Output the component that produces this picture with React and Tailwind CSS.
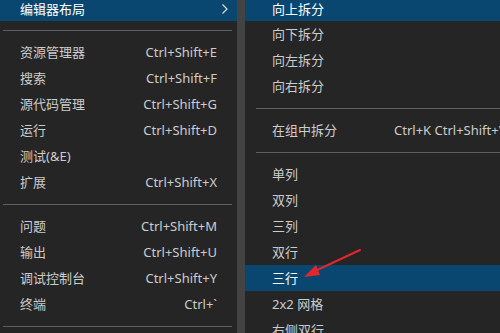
import React from 'react'

const leftGroups = [
  [
    { label: '资源管理器', key: 'Ctrl+Shift+E' },
    { label: '搜索', key: 'Ctrl+Shift+F' },
    { label: '源代码管理', key: 'Ctrl+Shift+G' },
    { label: '运行', key: 'Ctrl+Shift+D' },
    { label: '测试(&E)', key: '' },
    { label: '扩展', key: 'Ctrl+Shift+X' },
  ],
  [
    { label: '问题', key: 'Ctrl+Shift+M' },
    { label: '输出', key: 'Ctrl+Shift+U' },
    { label: '调试控制台', key: 'Ctrl+Shift+Y' },
    { label: '终端', key: 'Ctrl+`' },
  ],
]

const layouts = ['单列', '双列', '三列', '双行', '三行', '2x2 网格', '右侧双行']

function Sep({ className = '' }) {
  return (
    <div className={'h-[18px] flex items-center ' + className}>
      <div className="h-px w-full bg-[#5f5f5f]" />
    </div>
  )
}

function LeftRow({ label, shortcut }) {
  return (
    <div className="h-[26px] flex items-center pl-5 pr-5 text-[#cccccc]">
      <span className="flex-1">{label}</span>
      <span>{shortcut}</span>
    </div>
  )
}

function RightRow({ label, active }) {
  return (
    <div className={'h-[26px] flex items-center pl-[27px] ' + (active ? 'bg-[#094771] text-white' : 'text-[#cccccc]')}>
      {label}
    </div>
  )
}

export default function App() {
  return (
    <div
      className="relative w-[500px] h-[333px] overflow-hidden bg-[#252526] flex text-[13px] leading-none"
      style={{ fontFamily: '"Noto Sans", "Noto Sans CJK SC", sans-serif' }}
    >
      {/* left menu */}
      <div className="w-[237px] shrink-0">
        <div className="h-[24px] mt-[-3px] flex items-center pl-5 pr-2 bg-[#094771] text-white">
          <span className="flex-1">编辑器布局</span>
          <svg width="8" height="12" viewBox="0 0 8 12" fill="none" stroke="#d4d4d4" strokeWidth="1.3">
            <polyline points="1.5,1.5 6,6 1.5,10.5" />
          </svg>
        </div>
        <Sep className="px-[3px] mr-[2px]" />
        {leftGroups.map((group, i) => (
          <div key={i}>
            {group.map((it) => (
              <LeftRow key={it.label} label={it.label} shortcut={it.key} />
            ))}
            <Sep className="px-[3px] mr-[2px]" />
          </div>
        ))}
      </div>

      {/* scrollbar strip */}
      <div className="w-[8px] shrink-0 bg-[#434343]" />

      {/* right menu */}
      <div className="flex-1 min-w-0">
        <div className="h-[24px] mt-[-3px] flex items-center pl-[27px] bg-[#094771] text-white">向上拆分</div>
        <RightRow label="向下拆分" />
        <RightRow label="向左拆分" />
        <RightRow label="向右拆分" />
        <Sep className="pl-[11px]" />
        <div className="h-[26px] flex items-center pl-[27px] text-[#cccccc] whitespace-nowrap">
          <span className="w-[122px] shrink-0">在组中拆分</span>
          <span>Ctrl+K Ctrl+Shift+\</span>
        </div>
        <Sep className="pl-[11px]" />
        {layouts.map((l) => (
          <RightRow key={l} label={l} active={l === '三行'} />
        ))}
      </div>

      {/* annotation arrow */}
      <svg className="absolute left-0 top-0 pointer-events-none" width="500" height="333">
        <line x1="360" y1="250" x2="313" y2="272" stroke="#e3262b" strokeWidth="2" strokeLinecap="round" />
        <polygon points="304,277 316,265 320,275" fill="#e3262b" />
      </svg>
    </div>
  )
}
